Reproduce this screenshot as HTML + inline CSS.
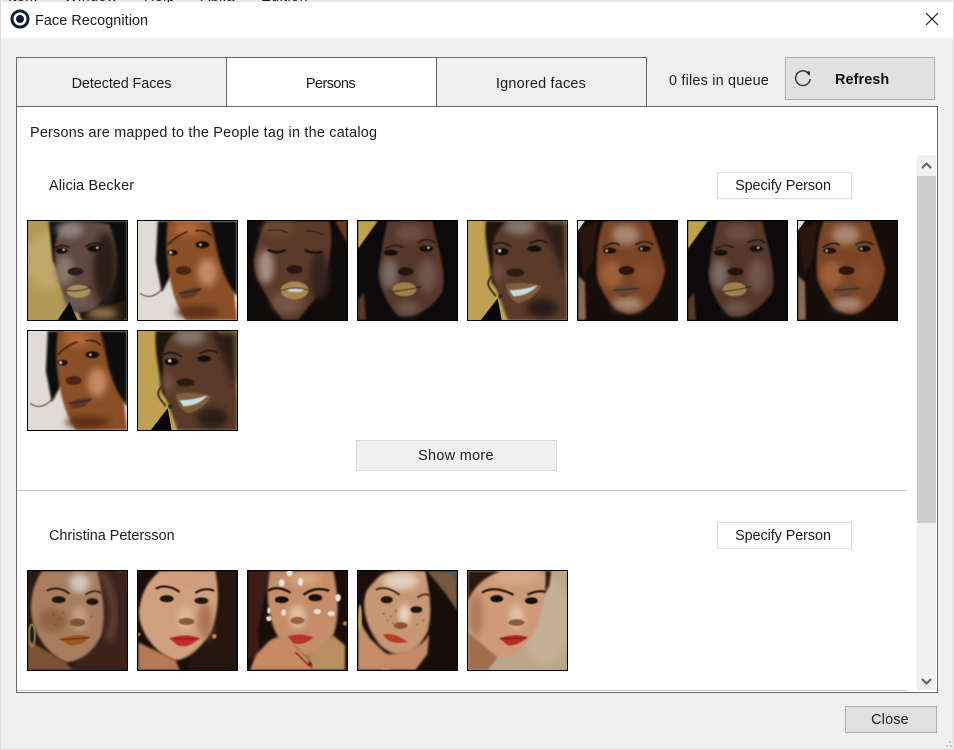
<!DOCTYPE html>
<html><head><meta charset="utf-8"><style>
html,body{margin:0;padding:0;width:954px;height:750px;overflow:hidden;background:#f0f0f0}
body{position:relative;font-family:"Liberation Sans",sans-serif;font-size:14.4px;color:#1c1c1c}
.a{position:absolute;box-sizing:border-box}
.t{position:absolute;white-space:nowrap;line-height:20px}
.c{text-align:center}
.th{position:absolute;width:101px;height:101px;box-sizing:border-box;border:1px solid #000;overflow:hidden;background:#333}
.th svg{display:block;width:99px;height:99px}
</style></head><body>
<svg width="0" height="0" style="position:absolute"><defs>
<filter id="b" x="-10%" y="-10%" width="120%" height="120%"><feGaussianBlur stdDeviation="1.1"/></filter>
<filter id="s" x="-30%" y="-30%" width="160%" height="160%"><feGaussianBlur stdDeviation="3.5"/></filter>
<filter id="e" x="-30%" y="-30%" width="160%" height="160%"><feGaussianBlur stdDeviation="0.6"/></filter>

<symbol id="f1" viewBox="0 0 100 100">
<rect width="100" height="100" fill="#b19a56"/><ellipse cx="20" cy="40" rx="22" ry="28" fill="#bfa96b" filter="url(#s)"/>
<path d="M21 0H100V100H55L25 40Z" fill="#0c0a0a" filter="url(#b)"/>
<path d="M27 35C25 12 38 0 55 0L82 3C92 30 92 55 82 72C70 90 55 95 45 91C36 82 30 60 27 35Z" fill="#5f4a40" filter="url(#b)"/>
<ellipse cx="78" cy="48" rx="12" ry="36" fill="#2f1f17" filter="url(#s)"/>
<ellipse cx="42" cy="9" rx="14" ry="8" fill="#8d8279" filter="url(#s)"/><ellipse cx="37" cy="50" rx="9" ry="15" fill="#8b776c" filter="url(#s)"/>
<ellipse cx="50" cy="80" rx="14" ry="8" fill="#6d5a50" filter="url(#s)"/>
<path d="M52 96L98 80V100H60Z" fill="#2a1a10" filter="url(#b)"/><ellipse cx="75" cy="93" rx="15" ry="6" fill="#8a6e48" filter="url(#s)"/>
<path d="M30 100L42 82L50 100Z" fill="#070606"/>
<g filter="url(#e)"><path d="M26 28Q34 22 42 27" stroke="#1b1210" stroke-width="1.5" fill="none"/><path d="M58 26Q66 20 76 25" stroke="#1b1210" stroke-width="1.5" fill="none"/><ellipse cx="34" cy="30" rx="6" ry="3" fill="#15100e"/><ellipse cx="67" cy="28" rx="7" ry="3.2" fill="#15100e"/><circle cx="36" cy="29" r="1" fill="#ccc"/><circle cx="70" cy="27" r="1" fill="#ccc"/>
<ellipse cx="48" cy="51" rx="8" ry="4" fill="#2b1c16"/><ellipse cx="51" cy="71" rx="12" ry="6.5" fill="#a98f5a"/><path d="M38 70Q50 72 64 67" stroke="#2c2018" stroke-width="1.1" fill="none"/></g>
</symbol>

<symbol id="f2" viewBox="0 0 100 100">
<rect width="100" height="100" fill="#e1dbd5"/>
<path d="M20 0H36V50L24 72L18 40Z" fill="#110b09" filter="url(#b)"/>
<path d="M2 73Q14 82 27 66" stroke="#4a3a30" stroke-width="1" fill="none" filter="url(#e)"/>
<path d="M30 0H76C78 25 92 50 97 72L100 100H48L40 85C32 65 26 35 30 0Z" fill="#8a4f28" filter="url(#b)"/>
<path d="M73 0H100V76C92 66 84 50 80 30Z" fill="#0f0a08" filter="url(#b)"/>
<ellipse cx="70" cy="52" rx="10" ry="14" fill="#c18a64" filter="url(#s)"/><ellipse cx="50" cy="8" rx="14" ry="7" fill="#b36a38" filter="url(#s)"/><ellipse cx="60" cy="92" rx="22" ry="6" fill="#5a2e14" filter="url(#s)"/>
<g filter="url(#e)"><path d="M30 24Q40 14 50 11" stroke="#2a170f" stroke-width="1.3" fill="none"/><path d="M58 10Q68 8 74 15" stroke="#2a170f" stroke-width="1.3" fill="none"/>
<ellipse cx="35" cy="32" rx="5" ry="3" fill="#1a0e09"/><circle cx="33" cy="32" r="1.2" fill="#eee"/><ellipse cx="65" cy="24" rx="7" ry="3.5" fill="#1f110a"/><circle cx="63" cy="24" r="1" fill="#ddd"/>
<ellipse cx="46" cy="50" rx="8" ry="4.5" fill="#4d2814"/><path d="M42 73Q52 66 65 68Q56 80 44 78Z" fill="#5d3a2a"/><path d="M41 73Q54 72 64 69" stroke="#2a1710" stroke-width="1" fill="none"/></g>
</symbol>

<symbol id="f3" viewBox="0 0 100 100">
<rect width="100" height="100" fill="#0f0b0b"/>
<path d="M88 0H100V22Z" fill="#6e3a1a" filter="url(#b)"/>
<path d="M18 0H82C88 25 80 60 65 82L50 100H35C25 85 5 60 6 38C10 18 14 8 18 0Z" fill="#5a3a2a" filter="url(#b)"/>
<ellipse cx="18" cy="46" rx="8" ry="17" fill="#a58e85" filter="url(#s)"/><ellipse cx="40" cy="82" rx="16" ry="12" fill="#765245" filter="url(#s)"/><ellipse cx="30" cy="8" rx="16" ry="8" fill="#6e4633" filter="url(#s)"/><ellipse cx="72" cy="55" rx="10" ry="24" fill="#36201a" filter="url(#s)"/>
<g filter="url(#e)"><path d="M20 10Q32 7 40 12" stroke="#2a1a14" stroke-width="1.2" fill="none"/><path d="M58 10Q68 10 76 14" stroke="#2a1a14" stroke-width="1" fill="none"/><path d="M20 29Q30 34 38 29" stroke="#140c0a" stroke-width="2.4" fill="none"/><path d="M57 29Q66 34 75 31" stroke="#140c0a" stroke-width="2.2" fill="none"/>
<ellipse cx="47" cy="49" rx="8" ry="4.500" fill="#2b1812"/><ellipse cx="47" cy="70" rx="14" ry="9" fill="#a8854f"/><path d="M32 71Q47 65 62 70" stroke="#3a2418" stroke-width="1" fill="none"/><ellipse cx="48" cy="70" rx="8" ry="1.500" fill="#c8dcd8"/></g>
</symbol>

<symbol id="f4" viewBox="0 0 100 100">
<rect width="100" height="100" fill="#0c0a0b"/>
<path d="M0 0H20L0 28Z" fill="#c0a24e" filter="url(#e)"/>
<path d="M0 80L6 72L8 100H0Z" fill="#5a3a22" filter="url(#b)"/>
<path d="M30 0H75C80 25 90 50 85 72C72 92 55 98 42 96C28 85 18 60 22 45C24 25 27 12 30 0Z" fill="#553729" filter="url(#b)"/>
<ellipse cx="32" cy="53" rx="8" ry="15" fill="#7b6a66" filter="url(#s)"/><ellipse cx="70" cy="55" rx="10" ry="17" fill="#6e5348" filter="url(#s)"/><ellipse cx="50" cy="88" rx="12" ry="7" fill="#6b5449" filter="url(#s)"/><ellipse cx="52" cy="12" rx="14" ry="9" fill="#6a5042" filter="url(#s)"/>
<g filter="url(#e)"><path d="M28 28Q38 22 46 27" stroke="#1a1210" stroke-width="1.3" fill="none"/><path d="M60 22Q70 16 78 22" stroke="#1a1210" stroke-width="1.3" fill="none"/><ellipse cx="33" cy="32" rx="7" ry="3" fill="#12100e"/><ellipse cx="69" cy="28" rx="7" ry="3" fill="#12100e"/><circle cx="71" cy="27" r="1" fill="#ccc"/>
<ellipse cx="48" cy="51" rx="8" ry="4" fill="#201510"/><ellipse cx="47" cy="69" rx="12" ry="7" fill="#9c8148"/><path d="M36 71Q50 70 64 66" stroke="#1f140e" stroke-width="1.1" fill="none"/></g>
</symbol>

<symbol id="f5" viewBox="0 0 100 100">
<rect width="100" height="100" fill="#bfa151"/>
<path d="M18 0H40V50L32 72L24 62C22 40 16 20 18 0Z" fill="#1c1410" filter="url(#b)"/>
<path d="M25 25C28 10 35 0 45 0H80C95 25 100 50 100 75V100H40C35 85 28 70 26 55Z" fill="#5a3a2c" filter="url(#b)"/>
<path d="M72 0H100V58C90 40 82 15 72 0Z" fill="#2a1c15" filter="url(#s)"/>
<ellipse cx="52" cy="6" rx="15" ry="8" fill="#85766c" filter="url(#s)"/><ellipse cx="30" cy="52" rx="6" ry="10" fill="#6e5040" filter="url(#s)"/><ellipse cx="75" cy="88" rx="16" ry="10" fill="#2b1c15" filter="url(#s)"/>
<path d="M24 56Q18 62 22 68L28 76" stroke="#2a1c14" stroke-width="1.6" fill="none" filter="url(#e)"/>
<path d="M13 100L30 78L34 100Z" fill="#080606"/><circle cx="33" cy="76" r="2.6" fill="#2b3238"/>
<g filter="url(#e)"><path d="M26 24Q34 19 44 26" stroke="#140d0a" stroke-width="1.4" fill="none"/><path d="M62 23Q72 17 80 22" stroke="#140d0a" stroke-width="1.4" fill="none"/><ellipse cx="34" cy="31" rx="7" ry="3.600" fill="#0e0a08"/><circle cx="32" cy="30" r="1.3" fill="#eee"/><ellipse cx="67" cy="28" rx="7" ry="3.2" fill="#16100d"/>
<ellipse cx="48" cy="52" rx="9" ry="4" fill="#2c1a11"/><path d="M38 64Q55 60 74 66Q66 80 50 83Q40 78 38 64Z" fill="#7d5f3a"/><path d="M42 70Q56 70 70 65Q62 75 46 76Z" fill="#c8dcdc"/></g>
</symbol>

<symbol id="f6" viewBox="0 0 100 100">
<rect width="100" height="100" fill="#150d09"/><path d="M0 0H7L0 10Z" fill="#e1d8d0"/>
<path d="M0 55L7 62L8 100H0Z" fill="#8a6a52" filter="url(#b)"/>
<path d="M0 10L20 0L15 40L6 55Z" fill="#2a1810" filter="url(#b)"/>
<path d="M26 0H72C78 15 86 38 88 50C84 72 74 90 55 94C38 94 28 80 20 60C17 40 20 15 26 0Z" fill="#7a4526" filter="url(#b)"/>
<ellipse cx="48" cy="14" rx="14" ry="10" fill="#a8846f" filter="url(#s)"/><ellipse cx="34" cy="54" rx="11" ry="13" fill="#a06038" filter="url(#s)"/><ellipse cx="68" cy="54" rx="10" ry="12" fill="#8a4e2a" filter="url(#s)"/><ellipse cx="50" cy="84" rx="15" ry="7" fill="#a58570" filter="url(#s)"/>
<g filter="url(#e)"><path d="M25 27Q34 20 42 24" stroke="#1f120c" stroke-width="1.400" fill="none"/><path d="M58 24Q68 18 76 24" stroke="#1f120c" stroke-width="1.400" fill="none"/><ellipse cx="32" cy="30" rx="6.500" ry="3" fill="#1a0f09"/><circle cx="29" cy="30" r="1" fill="#e0d0c0"/><ellipse cx="67" cy="28" rx="6.500" ry="3" fill="#1a0f09"/><circle cx="64" cy="28" r="1" fill="#c8b8a8"/>
<ellipse cx="49" cy="50" rx="8" ry="4.500" fill="#2e170c"/><path d="M36 69Q48 60 62 68Q52 79 42 76Z" fill="#6a4632"/><path d="M36 70Q49 69 62 68" stroke="#2a1810" stroke-width="1" fill="none"/></g>
</symbol>

<symbol id="c1" viewBox="0 0 100 100">
<rect width="100" height="100" fill="#2a1a14"/><path d="M90 0H100V20Z" fill="#5a5a5a" filter="url(#b)"/>
<path d="M65 0H100V100H40L75 70Z" fill="#3d241a" filter="url(#b)"/><path d="M72 0Q95 30 82 70" stroke="#6b4a36" stroke-width="6" fill="none" filter="url(#s)"/>
<path d="M14 0H70C74 20 80 40 74 65C66 82 52 92 38 92C20 85 2 60 3 35C4 18 8 10 14 0Z" fill="#a77c5e" filter="url(#b)"/>
<path d="M0 70L38 92L45 100H0Z" fill="#7c5234" filter="url(#b)"/>
<ellipse cx="52" cy="12" rx="10" ry="10" fill="#cfc7bd" filter="url(#s)"/><ellipse cx="52" cy="48" rx="7" ry="13" fill="#c7a083" filter="url(#s)"/><ellipse cx="25" cy="50" rx="14" ry="12" fill="#8f6444" filter="url(#s)"/>
<g filter="url(#e)"><path d="M19 20Q30 14 42 23" stroke="#2c1a12" stroke-width="1.8" fill="none"/><path d="M58 24Q66 18 74 22" stroke="#2c1a12" stroke-width="1.6" fill="none"/><ellipse cx="31" cy="29" rx="7" ry="3.500" fill="#1c1510"/><ellipse cx="65" cy="31" rx="6" ry="3.400" fill="#1c1510"/>
<g fill="#6a4228"><circle cx="26" cy="44" r=".8"/><circle cx="32" cy="48" r=".8"/><circle cx="28" cy="54" r=".8"/><circle cx="36" cy="42" r=".8"/><circle cx="64" cy="46" r=".8"/></g>
<ellipse cx="50" cy="52" rx="8" ry="4" fill="#7b5438"/><path d="M32 69Q48 62 62 67Q54 76 42 75Z" fill="#a0521e"/><path d="M32 69Q48 69 62 67" stroke="#4a2410" stroke-width="1" fill="none"/><ellipse cx="4" cy="65" rx="3" ry="11" fill="none" stroke="#a08a60" stroke-width="1.6"/></g>
</symbol>

<symbol id="c2" viewBox="0 0 100 100">
<rect width="100" height="100" fill="#1a0d08"/><path d="M72 0H100V100H50Z" fill="#26150e" filter="url(#b)"/>
<path d="M20 0H78C82 20 82 40 74 60C66 76 50 90 38 90C18 85 0 60 1 40C2 20 10 8 20 0Z" fill="#d0a07e" filter="url(#b)"/>
<path d="M0 72L38 90L42 100H0Z" fill="#b47a55" filter="url(#b)"/>
<path d="M0 0H22C10 10 3 22 1 38L0 35Z" fill="#1c0e08" filter="url(#b)"/>
<ellipse cx="45" cy="10" rx="20" ry="8" fill="#d09c7c" filter="url(#s)"/><ellipse cx="48" cy="48" rx="7" ry="12" fill="#e0b89c" filter="url(#s)"/><ellipse cx="68" cy="50" rx="7" ry="18" fill="#a87252" filter="url(#s)"/>
<g filter="url(#e)"><path d="M18 18Q28 12 42 21" stroke="#26130c" stroke-width="2.200" fill="none"/><path d="M58 22Q68 16 77 20" stroke="#26130c" stroke-width="2.200" fill="none"/><ellipse cx="29" cy="28" rx="7" ry="3.600" fill="#201610"/><ellipse cx="64" cy="30" rx="7" ry="3.300" fill="#201610"/>
<ellipse cx="49" cy="51" rx="8" ry="3.600" fill="#8a5a40"/><path d="M32 68Q48 62 62 68Q50 79 40 75Z" fill="#c02c2e"/><path d="M32 68Q48 69 62 68" stroke="#6a1414" stroke-width="1" fill="none"/><circle cx="1" cy="64" r="1.8" fill="#b87a2e"/><circle cx="77" cy="66" r="2.400" fill="#c08a44"/></g>
</symbol>

<symbol id="c3" viewBox="0 0 100 100">
<rect width="100" height="100" fill="#1a0e09"/><path d="M0 0H22L10 60L12 88H0Z" fill="#3a1f14" filter="url(#b)"/>
<path d="M22 0H86C92 25 92 50 86 65C76 82 60 90 48 85C30 75 14 45 22 0Z" fill="#c58e68" filter="url(#b)"/>
<path d="M20 72Q34 60 44 76L60 86L65 100H2L8 85Z" fill="#c68a62" filter="url(#b)"/><path d="M60 86L86 65L98 75V100H65Z" fill="#b98e60" filter="url(#b)"/>
<ellipse cx="50" cy="46" rx="8" ry="12" fill="#e3c0a4" filter="url(#s)"/><ellipse cx="58" cy="8" rx="16" ry="6" fill="#d7a680" filter="url(#s)"/>
<g filter="url(#e)"><g fill="#e6e4dc"><ellipse cx="42" cy="2" rx="3" ry="3.500"/><ellipse cx="34" cy="12" rx="3" ry="3.500"/><ellipse cx="53" cy="11" rx="2.600" ry="4"/><ellipse cx="91" cy="27" rx="2.800" ry="3.800"/><ellipse cx="70" cy="41" rx="3.600" ry="2.600"/><ellipse cx="84" cy="43" rx="3.600" ry="2.600"/><ellipse cx="36" cy="42" rx="2.400" ry="3.400"/><ellipse cx="21" cy="48" rx="2.600" ry="2.600"/><ellipse cx="21" cy="40" rx="1.600" ry="3"/></g>
<path d="M20 20Q30 14 43 22" stroke="#1f100a" stroke-width="2.200" fill="none"/><path d="M56 24Q68 15 82 20" stroke="#1f100a" stroke-width="2.400" fill="none"/><ellipse cx="34" cy="29" rx="7" ry="3.400" fill="#160e0a"/><ellipse cx="68" cy="27" rx="7" ry="3.600" fill="#160e0a"/>
<ellipse cx="50" cy="50" rx="7" ry="3.600" fill="#94603f"/><path d="M40 66Q52 62 66 67Q56 76 46 73Z" fill="#b6302c"/><path d="M46 74L62 90" stroke="#9c6a4a" stroke-width="1" fill="none"/><path d="M48 82L62 96" stroke="#8a1218" stroke-width="1.200" fill="none"/><path d="M62 92L64 96" stroke="#8a1218" stroke-width="3"/><circle cx="98" cy="53" r="2" fill="#c88a3a"/></g>
</symbol>

<symbol id="c4" viewBox="0 0 100 100">
<rect width="100" height="100" fill="#170d09"/><path d="M70 0H100V40L90 25Z" fill="#75593f" filter="url(#b)"/><path d="M92 0H100V12Z" fill="#555" filter="url(#b)"/>
<path d="M14 8Q30 -2 68 0C72 20 76 42 70 62L62 75C48 90 30 85 20 72C4 50 2 25 14 8Z" fill="#c79672" filter="url(#b)"/>
<path d="M0 48L12 68L30 85L32 100H0Z" fill="#c48e68" filter="url(#b)"/><path d="M26 84Q60 84 72 64L70 84L58 100H24Z" fill="#c48a66" filter="url(#b)"/>
<path d="M0 0H26L8 20L0 40Z" fill="#1c0f0a" filter="url(#b)"/>
<ellipse cx="43" cy="10" rx="18" ry="9" fill="#e3cfbd" filter="url(#s)"/><ellipse cx="47" cy="44" rx="5" ry="10" fill="#efe0d0" filter="url(#s)"/>
<g filter="url(#e)"><path d="M18 19Q28 14 42 24" stroke="#3a2015" stroke-width="1.800" fill="none"/><path d="M60 27Q68 21 72 25" stroke="#3a2015" stroke-width="1.600" fill="none"/><ellipse cx="29" cy="29" rx="6" ry="3.600" fill="#1e140e"/><ellipse cx="59" cy="39" rx="6" ry="3.400" fill="#1e140e"/>
<g fill="#7a4a2c"><circle cx="26" cy="43" r=".8"/><circle cx="33" cy="46" r=".8"/><circle cx="38" cy="40" r=".8"/><circle cx="30" cy="50" r=".8"/><circle cx="66" cy="50" r=".8"/><circle cx="60" cy="54" r=".8"/><circle cx="35" cy="53" r=".8"/></g>
<ellipse cx="43" cy="55" rx="7" ry="3.400" fill="#8b5434"/><path d="M25 64Q38 62 50 72Q38 74 30 70Z" fill="#b83e22"/><ellipse cx="2" cy="48" rx="2" ry="14" fill="#c29a60"/></g>
</symbol>

<symbol id="c5" viewBox="0 0 100 100">
<rect width="100" height="100" fill="#bca689"/><ellipse cx="78" cy="50" rx="25" ry="45" fill="#c6b094" filter="url(#s)"/>
<path d="M70 0H84L82 15L76 25L70 20Z" fill="#2a1610" filter="url(#b)"/>
<path d="M8 10C20 -2 60 -2 78 0C80 15 76 38 70 55C62 72 50 86 36 88C12 80 -2 50 0 25Z" fill="#cf9a78" filter="url(#b)"/>
<path d="M0 62L30 87L20 100H0Z" fill="#a36c4c" filter="url(#b)"/>
<ellipse cx="48" cy="6" rx="24" ry="6" fill="#d9ab8c" filter="url(#s)"/><ellipse cx="49" cy="46" rx="7" ry="12" fill="#e5c2a6" filter="url(#s)"/><ellipse cx="8" cy="45" rx="7" ry="22" fill="#b07a58" filter="url(#s)"/>
<path d="M0 0H34C18 5 6 15 0 30Z" fill="#2a1610" filter="url(#b)"/>
<g filter="url(#e)"><path d="M14 22Q26 14 46 24" stroke="#2a1409" stroke-width="2.200" fill="none"/><path d="M60 24Q70 19 78 21" stroke="#2a1409" stroke-width="2.200" fill="none"/><ellipse cx="29" cy="28" rx="6.500" ry="3.600" fill="#160e0a"/><ellipse cx="64" cy="30" rx="6.500" ry="3.400" fill="#160e0a"/>
<ellipse cx="49" cy="52" rx="8" ry="3.400" fill="#8c5b40"/><path d="M32 68Q48 62 60 67Q50 76 40 75Z" fill="#b82a2a"/><path d="M32 68Q46 69 60 67" stroke="#5e1212" stroke-width="1" fill="none"/></g>
</symbol>
</defs></svg>

<!-- window top strip -->
<div class="a" style="left:0;top:0;width:954px;height:38px;background:#fff"></div>
<div class="a" style="left:0;top:0;width:954px;height:2px;overflow:hidden;background:#e8e8e8"><span class="t" style="left:8px;top:-13px;word-spacing:22px;letter-spacing:.4px">Item Window Help Abila Edition</span></div>
<div class="a" style="left:0;top:0;width:1px;height:750px;background:#dcdcdc"></div>
<div class="a" style="left:953px;top:0;width:1px;height:750px;background:#dcdcdc"></div>
<div class="a" style="left:0;top:749px;width:954px;height:1px;background:#dcdcdc"></div>

<!-- logo -->
<svg class="a" style="left:10px;top:9px" width="20" height="20" viewBox="0 0 20 20"><circle cx="10" cy="10" r="8" fill="none" stroke="#0f1a33" stroke-width="3"/><circle cx="10" cy="10" r="4" fill="#0f1a33"/></svg>
<div class="t" style="left:35px;top:11px;color:#1b1b1b;letter-spacing:.07px">Face Recognition</div>
<svg class="a" style="left:925px;top:12px" width="14" height="14" viewBox="0 0 14 14"><path d="M1 1L13 13M13 1L1 13" stroke="#111" stroke-width="1.1" fill="none"/></svg>

<!-- tabs -->
<div class="a" style="left:16px;top:57px;width:211px;height:50px;background:#f0f0f0;border:1px solid #696969"></div>
<div class="a" style="left:226px;top:57px;width:211px;height:50px;background:#fff;border:1px solid #696969"></div>
<div class="a" style="left:436px;top:57px;width:211px;height:50px;background:#f0f0f0;border:1px solid #696969"></div>
<div class="t c" style="left:16px;top:74px;width:211px;letter-spacing:-.07px">Detected Faces</div>
<div class="t c" style="left:226px;top:74px;width:209px;letter-spacing:-.5px">Persons</div>
<div class="t c" style="left:436px;top:74px;width:210px;letter-spacing:.23px">Ignored faces</div>
<div class="t" style="left:669px;top:71px;letter-spacing:.2px">0 files in queue</div>

<!-- refresh -->
<div class="a" style="left:785px;top:57px;width:150px;height:43px;background:#e1e1e1;border:1px solid #adadad"></div>
<svg class="a" style="left:793px;top:68px" width="20" height="20" viewBox="0 0 20 20"><path d="M15.600 5.600A7.300 7.300 0 1 0 17.200 11" fill="none" stroke="#3a3a3a" stroke-width="1.500"/><path d="M12.500 3.600L17 3.200L16.600 8Z" fill="#222"/></svg>
<div class="t" style="left:835px;top:70px;font-weight:bold;color:#111;letter-spacing:.1px">Refresh</div>

<!-- panel -->
<div class="a" style="left:16px;top:106px;width:922px;height:587px;background:#fff;border:1px solid #696969"></div>
<div class="t" style="left:30px;top:123px;letter-spacing:.22px">Persons are mapped to the People tag in the catalog</div>

<!-- scrollbar -->
<div class="a" style="left:917px;top:155px;width:19px;height:535px;background:#f0f0f0"></div>
<div class="a" style="left:917px;top:176px;width:19px;height:347px;background:#cdcdcd"></div>
<svg class="a" style="left:920px;top:160px" width="13" height="12" viewBox="0 0 13 12"><path d="M2 8L6.500 3.500L11 8" fill="none" stroke="#606060" stroke-width="2"/></svg>
<svg class="a" style="left:920px;top:675px" width="13" height="12" viewBox="0 0 13 12"><path d="M2 4L6.500 8.500L11 4" fill="none" stroke="#606060" stroke-width="2"/></svg>

<!-- person 1 -->
<div class="t" style="left:49px;top:176px;letter-spacing:.16px">Alicia Becker</div>
<div class="a" style="left:717px;top:172px;width:135px;height:27px;background:#fff;border:1px solid #dcdcdc"></div>
<div class="t c" style="left:716px;top:176px;width:134px;letter-spacing:-.07px">Specify Person</div>

<div class="th" style="left:27px;top:220px"><svg><use href="#f1"/></svg></div>
<div class="th" style="left:137px;top:220px"><svg><use href="#f2"/></svg></div>
<div class="th" style="left:247px;top:220px"><svg><use href="#f3"/></svg></div>
<div class="th" style="left:357px;top:220px"><svg><use href="#f4"/></svg></div>
<div class="th" style="left:467px;top:220px"><svg><use href="#f5"/></svg></div>
<div class="th" style="left:577px;top:220px"><svg><use href="#f6"/></svg></div>
<div class="th" style="left:687px;top:220px"><svg><use href="#f4"/></svg></div>
<div class="th" style="left:797px;top:220px"><svg><use href="#f6"/></svg></div>
<div class="th" style="left:27px;top:330px"><svg><use href="#f2"/></svg></div>
<div class="th" style="left:137px;top:330px"><svg><use href="#f5"/></svg></div>

<div class="a" style="left:356px;top:440px;width:201px;height:31px;background:#f0f0f0;border:1px solid #dcdcdc"></div>
<div class="t c" style="left:356px;top:446px;width:200px;letter-spacing:.33px">Show more</div>
<div class="a" style="left:17px;top:490px;width:890px;height:1px;background:#c8c8c8"></div>

<!-- person 2 -->
<div class="t" style="left:49px;top:526px">Christina Petersson</div>
<div class="a" style="left:717px;top:522px;width:135px;height:27px;background:#fff;border:1px solid #dcdcdc"></div>
<div class="t c" style="left:716px;top:526px;width:134px;letter-spacing:-.07px">Specify Person</div>

<div class="th" style="left:27px;top:570px"><svg><use href="#c1"/></svg></div>
<div class="th" style="left:137px;top:570px"><svg><use href="#c2"/></svg></div>
<div class="th" style="left:247px;top:570px"><svg><use href="#c3"/></svg></div>
<div class="th" style="left:357px;top:570px"><svg><use href="#c4"/></svg></div>
<div class="th" style="left:467px;top:570px"><svg><use href="#c5"/></svg></div>
<div class="a" style="left:17px;top:690px;width:890px;height:1px;background:#c8c8c8"></div>

<!-- close -->
<div class="a" style="left:845px;top:706px;width:92px;height:27px;background:#e1e1e1;border:1px solid #adadad"></div>
<div class="t c" style="left:844px;top:710px;width:92px;letter-spacing:.2px">Close</div>
<div class="a" style="left:949px;top:741px;width:2px;height:2px;background:#c4c4c4"></div>
<div class="a" style="left:946px;top:745px;width:2px;height:2px;background:#c4c4c4"></div>
<div class="a" style="left:950px;top:745px;width:2px;height:2px;background:#c4c4c4"></div>
</body></html>
